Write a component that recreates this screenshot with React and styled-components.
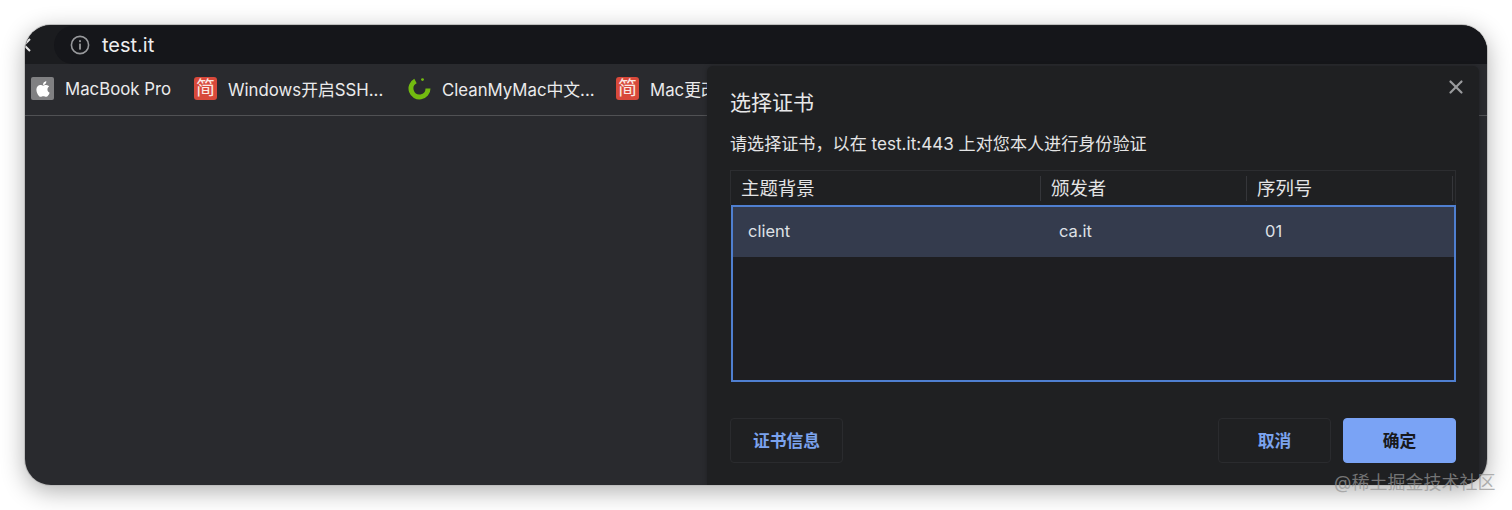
import React from "react"
import styled, { createGlobalStyle } from "styled-components"
import { FaApple } from "react-icons/fa"
import { FiX } from "react-icons/fi"

const GlobalStyle = createGlobalStyle`
  html, body {
    margin: 0;
    background: #fff;
    overflow: hidden;
  }
  body {
    font-family: "Inter", "Noto Sans CJK SC", sans-serif;
  }
`

const Page = styled.div`
  position: relative;
  width: 1512px;
  height: 510px;
  padding: 25px;
  box-sizing: border-box;
`

const Window = styled.div`
  position: relative;
  height: 460px;
  display: flex;
  flex-direction: column;
  border-radius: 26px;
  overflow: hidden;
  background: #292a2e;
  box-shadow: 0 0 0 1px #bdbdbd, 0 6px 24px rgba(0, 0, 0, 0.32);
`

const TopBar = styled.div`
  height: 39px;
  flex: none;
  display: flex;
  align-items: center;
  background: #1b1c1f;
`

const BackArrow = styled.svg`
  width: 10px;
  height: 16px;
  margin-left: -3px;
  flex: none;
`

const AddressPill = styled.div`
  flex: 1;
  height: 38px;
  margin-left: 22px;
  margin-top: 1px;
  padding-left: 16px;
  display: flex;
  align-items: center;
  gap: 12px;
  border-radius: 19px 0 0 19px;
  background: #15161a;
  color: #eeeeef;
  font-size: 20px;
`

const InfoIcon = styled.svg`
  width: 20px;
  height: 20px;
`

const BookmarkBar = styled.div`
  height: 52px;
  flex: none;
  display: flex;
  align-items: center;
  padding-left: 6px;
  padding-bottom: 2px;
  box-sizing: border-box;
  gap: 23px;
  border-bottom: 1px solid #505154;
  background: #292a2e;
  white-space: nowrap;
`

const Bookmark = styled.div`
  display: flex;
  align-items: center;
  gap: 11px;
  width: ${p => p.$width}px;
  color: #ebebec;
  font-size: 16.8px;
`

const AppleBadge = styled.span`
  width: 23px;
  height: 23px;
  flex: none;
  display: flex;
  align-items: center;
  justify-content: center;
  background: #808082;
  border-radius: 2px;
  color: #fff;
  font-size: 18px;
`

const RedBadge = styled.span`
  width: 23px;
  height: 23px;
  flex: none;
  display: flex;
  align-items: center;
  justify-content: center;
  background: #d8493b;
  border-radius: 3px;
  color: #fbe9e6;
  font-size: 19px;
  line-height: 1;
`

const RingIcon = styled.svg`
  width: 23px;
  height: 23px;
  flex: none;
`

const Dialog = styled.div`
  position: absolute;
  top: 41px;
  right: 8px;
  bottom: 0;
  width: 772px;
  padding: 0 23px;
  box-sizing: border-box;
  display: flex;
  flex-direction: column;
  background: #1f2022;
  box-shadow: 0 0 5px rgba(0, 0, 0, 0.25);
  border-radius: 6px 6px 0 0;
`

const CloseButton = styled.span`
  position: absolute;
  top: 10px;
  right: 12px;
  color: #9a9b9e;
  font-size: 22px;
  line-height: 1;
  display: flex;
`

const Title = styled.h2`
  margin: 22px 0 0;
  height: 30px;
  color: #e8e8e9;
  font-size: 21px;
  font-weight: 400;
  line-height: 30px;
`

const Subtitle = styled.p`
  margin: 14px 0 0;
  height: 24px;
  color: #e4e4e5;
  font-size: 17.1px;
  line-height: 24px;
  white-space: nowrap;
`

const TableHead = styled.div`
  margin-top: 14px;
  height: 35px;
  display: grid;
  grid-template-columns: 310px 206px 1fr;
  align-items: center;
  box-sizing: border-box;
  border: 1px solid #2c2d30;
  border-bottom: none;
  color: #e4e4e5;
  font-size: 18.4px;
`

const HeadCell = styled.div`
  height: 25px;
  padding-left: 10px;
  line-height: 25px;
  border-right: 1px solid #35363a;
  margin-right: ${p => (p.$last ? "2px" : "0")};
`

const TableBody = styled.div`
  height: 177px;
  margin-left: 1px;
  box-sizing: border-box;
  border: 2px solid #4f7fd0;
  background: #1e1e21;
`

const SelectedRow = styled.div`
  height: 50px;
  padding-bottom: 3px;
  box-sizing: border-box;
  display: grid;
  grid-template-columns: 311px 206px 1fr;
  align-items: center;
  background: #343b4d;
  color: #dfe1e6;
  font-size: 16.5px;
`

const RowCell = styled.div`
  padding-left: 15px;
`

const Footer = styled.div`
  margin-top: 36px;
  display: flex;
  justify-content: space-between;
`

const ButtonGroup = styled.div`
  display: flex;
  gap: 12px;
`

const DialogButton = styled.button`
  width: 113px;
  height: 45px;
  padding: 0 0 2px;
  box-sizing: border-box;
  border-radius: 4px;
  border: 1px solid ${p => (p.$primary ? "#7aa3f5" : "#2a2b2e")};
  background: ${p => (p.$primary ? "#7aa3f5" : "#1f2022")};
  color: ${p => (p.$primary ? "#18191c" : "#7ba3ee")};
  font-family: inherit;
  font-size: 16.8px;
  font-weight: 700;
`

const Watermark = styled.div`
  position: absolute;
  left: 1334px;
  top: 470px;
  color: rgba(150, 150, 150, 0.72);
  font-size: 18px;
  line-height: 26px;
  white-space: nowrap;
`

const App = () => {
  return (
    <Page>
      <GlobalStyle />
      <Window>
        <TopBar>
          <BackArrow viewBox="0 0 10 16">
            <path d="M8 2 L2 8 L8 14" fill="none" stroke="#e6e6e6" strokeWidth="2" />
          </BackArrow>
          <AddressPill>
            <InfoIcon viewBox="0 0 20 20">
              <circle cx="10" cy="10" r="8.6" fill="none" stroke="#97989b" strokeWidth="1.6" />
              <rect x="9.1" y="8.6" width="1.8" height="6" fill="#97989b" />
              <rect x="9.1" y="5.2" width="1.8" height="1.9" fill="#97989b" />
            </InfoIcon>
            test.it
          </AddressPill>
        </TopBar>
        <BookmarkBar>
          <Bookmark $width={140}>
            <AppleBadge><FaApple /></AppleBadge>
            MacBook Pro
          </Bookmark>
          <Bookmark $width={191}>
            <RedBadge>简</RedBadge>
            Windows开启SSH...
          </Bookmark>
          <Bookmark $width={185}>
            <RingIcon viewBox="0 0 23 23">
              <path
                d="M7.5 4 A8.5 8.5 0 1 0 20 11.5"
                fill="none"
                stroke="#72ba10"
                strokeWidth="5"
              />
              <circle cx="14.5" cy="2.6" r="1.4" fill="#72ba10" />
            </RingIcon>
            CleanMyMac中文...
          </Bookmark>
          <Bookmark $width={200}>
            <RedBadge>简</RedBadge>
            Mac更改
          </Bookmark>
        </BookmarkBar>
        <Dialog>
          <CloseButton><FiX strokeWidth={2.4} /></CloseButton>
          <Title>选择证书</Title>
          <Subtitle>请选择证书，以在 test.it:443 上对您本人进行身份验证</Subtitle>
          <TableHead>
            <HeadCell>主题背景</HeadCell>
            <HeadCell>颁发者</HeadCell>
            <HeadCell $last>序列号</HeadCell>
          </TableHead>
          <TableBody>
            <SelectedRow>
              <RowCell>client</RowCell>
              <RowCell>ca.it</RowCell>
              <RowCell>01</RowCell>
            </SelectedRow>
          </TableBody>
          <Footer>
            <DialogButton>证书信息</DialogButton>
            <ButtonGroup>
              <DialogButton>取消</DialogButton>
              <DialogButton $primary>确定</DialogButton>
            </ButtonGroup>
          </Footer>
        </Dialog>
      </Window>
      <Watermark>@稀土掘金技术社区</Watermark>
    </Page>
  )
}

export default App
